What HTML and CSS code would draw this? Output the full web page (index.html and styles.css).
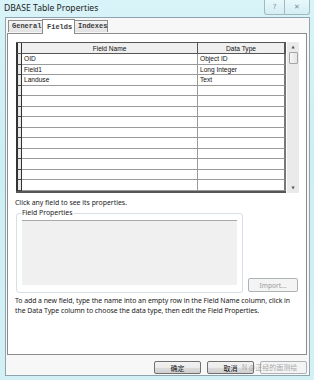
FILE: index.html
```html
<!DOCTYPE html>
<html>
<head>
<meta charset="utf-8">
<link rel="stylesheet" href="styles.css">
</head>
<body>
<div class="window">
  <div class="titlebar">
    <span class="title">DBASE Table Properties</span>
    <div class="caption">
      <span class="cap-btn help">?</span>
      <span class="cap-btn close">&#x2715;</span>
    </div>
  </div>
  <div class="client">
    <div class="tabs">
      <span class="tab">General</span>
      <span class="tab active">Fields</span>
      <span class="tab">Indexes</span>
    </div>
    <div class="panel">
      <div class="gridwrap">
        <div class="grid">
          <div class="row head">
            <span class="rh"></span><span class="c1">Field Name</span><span class="c2">Data Type</span>
          </div>
          <div class="row"><span class="rh"></span><span class="c1">OID</span><span class="c2">Object ID</span></div>
          <div class="row"><span class="rh"></span><span class="c1">Field1</span><span class="c2">Long Integer</span></div>
          <div class="row"><span class="rh"></span><span class="c1">Landuse</span><span class="c2">Text</span></div>
          <div class="row"><span class="rh"></span><span class="c1"></span><span class="c2"></span></div>
          <div class="row"><span class="rh"></span><span class="c1"></span><span class="c2"></span></div>
          <div class="row"><span class="rh"></span><span class="c1"></span><span class="c2"></span></div>
          <div class="row"><span class="rh"></span><span class="c1"></span><span class="c2"></span></div>
          <div class="row"><span class="rh"></span><span class="c1"></span><span class="c2"></span></div>
          <div class="row"><span class="rh"></span><span class="c1"></span><span class="c2"></span></div>
          <div class="row"><span class="rh"></span><span class="c1"></span><span class="c2"></span></div>
          <div class="row"><span class="rh"></span><span class="c1"></span><span class="c2"></span></div>
          <div class="row"><span class="rh"></span><span class="c1"></span><span class="c2"></span></div>
          <div class="row"><span class="rh"></span><span class="c1"></span><span class="c2"></span></div>
        </div>
        <div class="scrollbar">
          <span class="arrow up">&#x25B2;</span>
          <span class="thumb"></span>
          <span class="track"></span>
          <span class="arrow down">&#x25BC;</span>
        </div>
      </div>
      <p class="hint">Click any field to see its properties.</p>
      <div class="propsrow">
        <fieldset class="group">
          <legend>Field Properties</legend>
          <div class="propbox"></div>
        </fieldset>
        <span class="btn disabled import">Import...</span>
      </div>
      <p class="help-text">To add a new field, type the name into an empty row in the Field Name column, click in the Data Type column to choose the data type, then edit the Field Properties.</p>
    </div>
    <div class="buttons">
      <span class="btn">确定</span>
      <span class="btn">取消</span>
      <span class="btn disabled"></span>
    </div>
    <span class="watermark">N @正经的面测绘</span>
  </div>
</div>
</body>
</html>
```

FILE: styles.css
```css
* { box-sizing: border-box; }
html, body { margin: 0; padding: 0; }
body {
  width: 314px;
  height: 380px;
  overflow: hidden;
  font-family: "Noto Sans", "Noto Sans CJK SC", sans-serif;
  color: #1a1a1a;
}
.window {
  width: 314px;
  height: 380px;
  background: linear-gradient(180deg, #d9f4f8 0%, #cdeef3 40%, #d3f0f5 100%);
  padding: 0 4px 4px 5px;
  display: flex;
  flex-direction: column;
}
.titlebar {
  height: 17px;
  display: flex;
  align-items: flex-start;
  position: relative;
}
.title {
  font-size: 8.6px;
  line-height: 17px;
  margin-left: -1px;
  color: #1b1b1b;
}
.caption {
  margin-left: auto;
  margin-right: 0;
  display: flex;
}
.cap-btn {
  height: 15px;
  display: flex;
  align-items: center;
  justify-content: center;
  font-size: 7px;
  color: #7a8a90;
  border: 1px solid #a3b9bf;
  border-top: none;
  background: linear-gradient(180deg, #e8f8fb, #d3eef3);
  font-family: "DejaVu Sans", sans-serif;
}
.cap-btn.help { width: 21px; border-radius: 0 0 0 3px; }
.cap-btn.close { width: 25px; border-left: none; border-radius: 0 0 3px 0; }
.client {
  flex: 1;
  position: relative;
  background: #f7f7f7;
  border: 1px solid #8ea5ad;
  padding: 1px 2px 0 1px;
  display: flex;
  flex-direction: column;
}
.tabs {
  display: flex;
  align-items: flex-end;
  height: 14px;
  padding-left: 1px;
  position: relative;
  z-index: 2;
}
.tab {
  font-family: "Liberation Mono", monospace;
  font-weight: bold;
  font-size: 7px;
  color: #3a3a3a;
  height: 12px;
  line-height: 11px;
  padding: 0 3px;
  border: 1px solid #8c8c8c;
  border-bottom: none;
  background: linear-gradient(180deg, #f4f4f4, #e2e2e2);
  margin-bottom: 1px;
}
.tab:first-child { width: 35px; }
.tab.active {
  width: 33px;
  height: 15px;
  line-height: 14px;
  background: #fff;
  margin: 0 -1px -1px;
  padding: 0 4px;
  z-index: 3;
  position: relative;
}
.tab:last-child { width: 34px; }
.panel {
  height: 322px;
  background: #fff;
  border: 1px solid #8c8c8c;
  padding: 8px 7px 0 8px;
  display: flex;
  flex-direction: column;
}
.gridwrap {
  display: flex;
  height: 151px;
}
.grid {
  width: 271px;
  display: grid;
  grid-template-rows: 11px repeat(13, 1fr);
  border-top: 1px solid #555;
  border-bottom: 2px solid #555;
  font-family: "Liberation Sans", sans-serif;
  font-size: 6.6px;
  color: #111;
}
.row {
  display: grid;
  grid-template-columns: 6px 176px 88px;
}
.row > span {
  border-bottom: 1px solid #9a9a9a;
  border-right: 1px solid #9a9a9a;
  display: flex;
  align-items: center;
  padding-left: 2px;
  overflow: hidden;
  white-space: nowrap;
}
.row .rh {
  border-left: 2px solid #333;
  border-right: 1px solid #333;
  border-bottom: 1px solid #444;
  background: #e9e9e9;
  padding: 0;
}
.row .c2 { border-right: 2px solid #777; }
.row.head > span {
  background: #efefef;
  justify-content: center;
  padding: 0;
  border-bottom: 1px solid #555;
}
.row.head .c1, .row.head .c2 { border-right-color: #555; }
.row.head .c2 { border-right: 2px solid #555; }
.scrollbar {
  width: 12px;
  margin-left: 1px;
  background: #eaeaea;
  display: flex;
  flex-direction: column;
  align-items: center;
}
.arrow {
  font-size: 4px;
  color: #555;
  height: 10px;
  line-height: 10px;
  font-family: "DejaVu Sans", sans-serif;
}
.thumb {
  width: 9px;
  height: 12px;
  border: 1px solid #a5a5a5;
  border-radius: 1px;
  background: linear-gradient(90deg, #f5f5f5, #e4e4e4);
}
.track { flex: 1; }
.hint {
  margin: 5px 0 0 -1px;
  font-size: 6.9px;
  line-height: 9px;
  height: 10px;
}
.propsrow {
  display: flex;
  align-items: flex-end;
  margin-top: 1px;
}
.group {
  width: 227px;
  height: 84px;
  margin: 0;
  border: 1px solid #d5dfe5;
  border-radius: 3px;
  padding: 0 5px 2px 5px;
}
.group legend {
  font-size: 6.9px;
  line-height: 8px;
  padding: 0 1px;
  margin-left: -1px;
  color: #222;
}
.propbox {
  height: 65px;
  margin-top: 3px;
  background: #f0f0f0;
  border-top: 1px solid #a9a9a9;
}
.btn {
  display: flex;
  align-items: center;
  justify-content: center;
  height: 14px;
  border: 1px solid #707070;
  border-radius: 2px;
  background: linear-gradient(180deg, #f2f2f2 0%, #ebebeb 50%, #dddddd 51%, #cfcfcf 100%);
  font-size: 7px;
  color: #111;
}
.btn.disabled {
  border-color: #adb2b5;
  background: #f4f4f4;
  color: #9a9a9a;
}
.import {
  width: 50px;
  margin-left: 5px;
  margin-bottom: 1px;
  font-size: 6.6px;
}
.help-text {
  margin: 3px 0 0 -1px;
  font-size: 6.9px;
  line-height: 10px;
  letter-spacing: -0.05px;
}
.buttons {
  display: flex;
  justify-content: flex-end;
  gap: 6px;
  margin-top: 6px;
}
.buttons .btn {
  width: 47px;
  height: 13px;
  font-family: "Noto Sans CJK SC", sans-serif;
  font-size: 7px;
}
.watermark {
  position: absolute;
  left: 236px;
  bottom: 3px;
  font-size: 7px;
  line-height: 10px;
  color: rgba(110, 110, 110, 0.6);
  font-family: "Noto Sans CJK SC", sans-serif;
}
```
